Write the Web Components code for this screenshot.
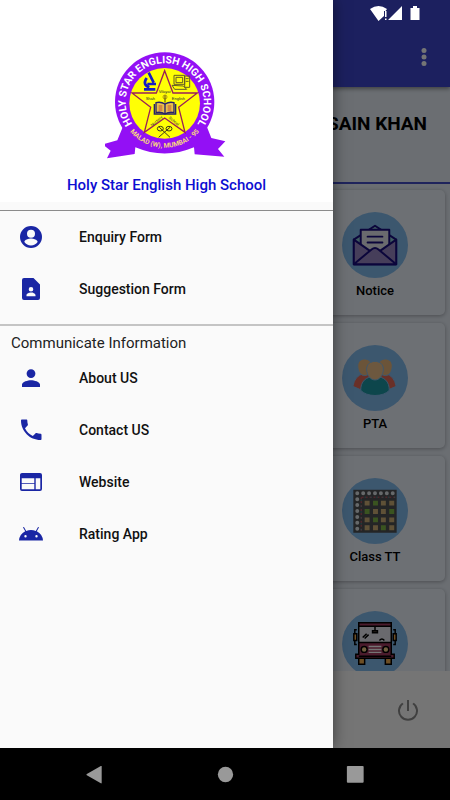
<!DOCTYPE html>
<html lang="en">
<head>
<meta charset="utf-8">
<meta name="viewport" content="width=device-width, initial-scale=1">
<title>Holy Star English High School</title>
<style>
	html, body { height: 100%; margin: 0; }
	body { font-family: Roboto, sans-serif; color: #000; background: #000; }
</style>
</head>
<body>

<school-app></school-app>

<script>

const ICONS = {
	account: '<path fill-rule="evenodd" d="M12 1a11 11 0 1 0 0 22 11 11 0 0 0 0-22zm0 3.800a4 4 0 1 1 0 8 4 4 0 0 1 0-8zm0 15.700a8 8 0 0 1-6.600-3.500c0-2.200 4.400-3.400 6.600-3.400s6.600 1.200 6.600 3.400a8 8 0 0 1-6.600 3.500z"/>',
	contactPage: '<path fill-rule="evenodd" d="M14.500 1H5a2 2 0 0 0-2 2v18a2 2 0 0 0 2 2h14a2 2 0 0 0 2-2V7.500zM12 10a2.300 2.300 0 1 1 0 4.600 2.300 2.300 0 0 1 0-4.600zm4.500 9.200h-9v-.9c0-2 3-2.800 4.500-2.800s4.500.8 4.500 2.800z"/>',
	person: '<path d="M12 12a4.400 4.400 0 1 0 0-8.800 4.400 4.400 0 0 0 0 8.800zm0 2.200c-3 0-9 1.500-9 4.400V21h18v-2.400c0-2.900-6-4.400-9-4.400z"/>',
	phone: '<path d="M6 10.200a16.500 16.500 0 0 0 7.800 7.800l2.600-2.600c.3-.3.800-.4 1.200-.3 1.200.4 2.500.6 3.900.6.600 0 1 .5 1 1v4.300c0 .6-.4 1-1 1C10.800 22 2 13.200 2 2.500c0-.6.500-1 1-1h4.300c.6 0 1 .4 1 1 0 1.400.2 2.700.6 3.900.1.400 0 .8-.3 1.200z"/>',
	web: '<path fill-rule="evenodd" d="M3 3h18a2 2 0 0 1 2 2v14a2 2 0 0 1-2 2H3a2 2 0 0 1-2-2V5c0-1.100.9-2 2-2zm-.3 5.300v4.900h12.600V8.300zm0 5.700v5.300h12.600V14zM16.700 8.300v11h4.600v-11z"/>',
	android: '<path fill-rule="evenodd" d="m17.800 9.300 2-3.500a.5.500 0 0 0-.9-.5l-2.100 3.600a12.500 12.500 0 0 0-9.600 0L5.100 5.300a.5.500 0 0 0-.9.500l2 3.500A11.500 11.500 0 0 0 0 18.500h24a11.500 11.500 0 0 0-6.200-9.200zM6.500 15.500a1.200 1.200 0 1 1 0-2.400 1.200 1.200 0 0 1 0 2.400zm11 0a1.200 1.200 0 1 1 0-2.400 1.200 1.200 0 0 1 0 2.400z"/>',
	more: '<circle cx="12" cy="5.400" r="2.500"/><circle cx="12" cy="12" r="2.500"/><circle cx="12" cy="18.600" r="2.500"/>',
	power: '<path d="M11 2h2v11h-2zM17.800 4.700l-1.400 1.400a8 8 0 1 1-8.800 0L6.200 4.700a10 10 0 1 0 11.600 0z"/>',
	back: '<path d="M19.500 3.500v17.200c0 .5-.5.700-.9.500L4 12.800c-.5-.3-.5-.9 0-1.200l14.600-8.500c.4-.2.900 0 .9.400z"/>',
	home: '<circle cx="12" cy="12" r="8"/>',
	recent: '<rect x="3" y="3" width="17.500" height="17.500" rx="1"/>'
};

const ART = {
	notice: `
		<g stroke="#180d80" stroke-width="2" stroke-linejoin="round">
			<path fill="#8ac6cf" d="M12 28 33.500 14 55 28v25H12z"/>
			<path fill="#e8e8f0" d="M19 18h29v22H19z"/>
			<path fill="#9a87c4" d="M12 28l21.500 15L55 28v25H12z"/>
			<path fill="#9a87c4" d="M12 53l18-15q3.500-3 7 0l18 15z"/>
			<path fill="none" stroke-linecap="round" d="M26 25h15M26 31h15"/>
		</g>`,
	pta: `
		<g stroke="#84bdf0" stroke-width="1">
			<path fill="#e46a58" d="M11 42q2-11 11-13h22q9 2 11 13l-7 3H18z"/>
			<path fill="#e9b87d" d="M16 21c0-9 14-9 14 0 0 6-3 10-7 10s-7-4-7-10zM37 21c0-9 14-9 14 0 0 6-3 10-7 10s-7-4-7-10z"/>
			<path fill="#1d98a5" d="M19 46c0-9 5-14 14.500-14S48 37 48 46c-6 7-23 7-29 0z"/>
			<path fill="#edc08a" d="M25 24.500C25 14 42 14 42 24.500c0 6-4 11-8.500 11S25 30.500 25 24.500z"/>
		</g>`,
	timetable: `
		<path fill="#505254" d="M11.500 12h44v43.500h-44z"/>
		<g fill="none" stroke="#dfe4e8" stroke-width="4" stroke-linecap="round" stroke-dasharray="0 6">
			<path d="M15.500 15.500h37M15.500 21.500v31"/>
		</g>
		<g fill="none" stroke-width="1">
			<path stroke="#d45563" stroke-dasharray="2 2" d="M19.500 19.500v34M20 19.500h34"/>
			<path stroke="#3cb0ba" stroke-dasharray="1 5" d="M19.500 22v31M23 19.500h31"/>
		</g>
		<path fill="#d0b078" d="M23 23h5v5h-5zM39.500 23h5v5h-5zM48 23h5v5h-5zM31.500 31.500h5v5h-5zM39.500 31.500h5v5h-5zM23 40h5v5h-5zM39.500 40h5v5h-5zM48 40h5v5h-5zM23 48h5v5h-5zM31.500 48h5v5h-5zM48 48h5v5h-5z"/>
		<path fill="#7fb747" d="M31.500 23h5v5h-5zM23 31.500h5v5h-5zM48 31.500h5v5h-5zM31.500 40h5v5h-5zM39.500 48h5v5h-5z"/>`,
	bus: `
		<g stroke="#000" stroke-width="1.500">
			<path fill="#f0ad50" d="M17 48h6v6h-6zM44 48h6v6h-6zM12 23h3v7h-3zM52 23h3v7h-3z"/>
			<path fill="none" d="M15 19h-2v4M52 19h2v4M15 34h-2v-4M52 34h2v-4"/>
			<path fill="#a43c60" d="M17 12h33v32h3v4H14v-4h3z"/>
			<path fill="#e8e8f0" d="M17 15.500h33V32H17z"/>
			<path fill="#785c4b" d="M31 20h5v2h-5z"/>
			<path fill="none" d="m21 27 4-4m-2 5 4-4m11 6q2.500-3 5 0M17 46h33M33.500 16v4"/>
			<circle cx="22.500" cy="39" r="3" fill="#f6cf8b"/>
			<circle cx="44.500" cy="39" r="3" fill="#f6cf8b"/>
		</g>
		<path stroke="#fff" stroke-width="1.500" d="M27 36h13M27 39h13M27 42h13"/>`
};

class AppIcon extends HTMLElement {

	constructor() {

		super();

		this.attachShadow({ mode: 'open' });
		this.shadowRoot.innerHTML = `
			<style>
				:host { display: block; width: 24px; height: 24px; }
				svg { display: block; width: 100%; height: 100%; fill: currentColor; }
			</style>
			<svg viewBox="0 0 24 24" aria-hidden="true">${ICONS[this.getAttribute('name')]}</svg>
		`;

	}

}

class SchoolLogo extends HTMLElement {

	constructor() {

		super();

		this.attachShadow({ mode: 'open' });
		this.shadowRoot.innerHTML = `
			<style>
				:host { display: block; width: 124px; height: 110px; }
				svg { display: block; width: 100%; height: 100%; font-family: "Liberation Sans", Arial, sans-serif; }
			</style>
			<svg viewBox="31 22 372 330" role="img" aria-label="School crest">
				<defs>
					<path id="top" d="M127 255A117 117 0 1 1 293 255"/>
					<path id="bottom" d="M90 237A136 136 0 0 0 330 237"/>
				</defs>
				<path fill="#9310f5" d="M24 299 68 287 84 248Q210 365 336 245L350 280 392 290 370 313 389 336 300 329 298 308Q210 345 122 308L120 328 37 341 48 318z"/>
				<circle cx="210" cy="172" r="149" fill="#9310f5"/>
				<circle cx="210" cy="176" r="106" fill="#ffff05"/>
				<path fill="none" stroke="#9a2058" stroke-width="4" d="M210 78 235 145 308 145 252 188 271 263 210 220 149 263 168 188 112 145 185 145z"/>
				<g fill="none" stroke="#161cc4" stroke-width="8">
					<path d="m162 84 15 30M156 100q-14 20 8 28M148 134h34M158 118h26"/>
				</g>
				<g fill="none" stroke="#645b29" stroke-width="3">
					<path d="M238 92h32v27h-32zM244 98h20v16h-20zM270 94h15v34h-15zM273 102h9M273 110h9M232 122l34 2 10 10h-36z"/>
				</g>
				<g stroke="#27216c" stroke-width="4">
					<path fill="#e9c04d" d="M184 174q14-4 27 4 13-8 27-4v30q-14-4-27 4-13-8-27-4z"/>
					<path fill="none" d="M179 178v30h64v-30M211 178v30"/>
					<path stroke="#c0503a" stroke-width="3" d="M192 184h11M192 190h11M192 196h11M219 184h11M219 190h11M219 196h11"/>
				</g>
				<circle cx="211" cy="157" r="6" fill="none" stroke="#b39b10" stroke-width="3"/>
				<path stroke="#54421b" stroke-width="3" d="M211 152v22"/>
				<g fill="none" stroke="#3b341b" stroke-width="3">
					<path d="m194 248 32 30M226 248 192 278"/>
					<ellipse cx="197" cy="252" rx="9" ry="7"/><ellipse cx="223" cy="252" rx="9" ry="7"/>
				</g>
				<g font-size="12" fill="#242a38" text-anchor="middle">
					<text x="210" y="145">Vilayat</text>
					<text x="167" y="167">Shah</text>
					<text x="251" y="167">English</text>
					<text transform="translate(188 232) rotate(-40)">Nursery</text>
					<text transform="translate(235 232) rotate(40)">School</text>
				</g>
				<g font-family="Roboto, sans-serif" font-weight="700" text-anchor="middle">
					<text font-size="31" fill="#fff"><textPath href="#top" startOffset="50%">HOLY STAR ENGLISH HIGH SCHOOL</textPath></text>
					<text font-size="20" fill="#f8d77e"><textPath href="#bottom" startOffset="50%">MALAD (W), MUMBAI - 95</textPath></text>
				</g>
			</svg>
		`;

	}

}

class MenuItem extends HTMLElement {

	constructor() {

		super();

		this.attachShadow({ mode: 'open' });
		this.shadowRoot.innerHTML = `
			<style>
				:host { display: block; }
				a {
					display: flex;
					align-items: center;
					gap: 36px;
					height: 52px;
					padding: 0 19px;
					color: #111;
					font-size: 14px;
					font-weight: 500;
					text-decoration: none;
				}
				app-icon { color: #1a26a4; }
			</style>
			<a href="#"><app-icon name="${this.getAttribute('icon')}"></app-icon><slot></slot></a>
		`;

	}

}

class NavDrawer extends HTMLElement {

	constructor() {

		super();

		this.attachShadow({ mode: 'open' });
		this.shadowRoot.innerHTML = `
			<style>
				:host { display: block; background: #fafafa; box-shadow: 0 0 14px rgba(0,0,0,0.5); overflow: hidden; }
				header {
					display: flex;
					flex-direction: column;
					align-items: center;
					gap: 13px;
					padding: 52px 0 7px;
					background: #fff;
				}
				h1 { margin: 0; font-size: 15px; line-height: 20px; font-weight: 500; color: #0d0dd1; }
				nav { border-top: 1px solid #8b8b8b; margin-top: 8px; }
				nav + nav { border-top: 2px solid #c4c4c4; margin-top: 9px; }
				h2 { margin: 0; padding: 8px 11px 0; font-size: 15px; line-height: 18px; font-weight: 400; color: #222; }
			</style>
			<header>
				<school-logo></school-logo>
				<h1>Holy Star English High School</h1>
			</header>
			<nav>
				<menu-item icon="account">Enquiry Form</menu-item>
				<menu-item icon="contactPage">Suggestion Form</menu-item>
			</nav>
			<nav>
				<h2>Communicate Information</h2>
				<menu-item icon="person">About US</menu-item>
				<menu-item icon="phone">Contact US</menu-item>
				<menu-item icon="web">Website</menu-item>
				<menu-item icon="android">Rating App</menu-item>
			</nav>
		`;

	}

}

class TileCard extends HTMLElement {

	constructor() {

		super();

		this.attachShadow({ mode: 'open' });
		this.shadowRoot.innerHTML = `
			<style>
				:host { display: block; }
				button {
					display: flex;
					flex-direction: column;
					align-items: center;
					gap: 4px;
					width: 100%;
					height: 125px;
					padding: 22px 0 0;
					border: 0;
					border-radius: 5px;
					background: #eef4fc;
					box-shadow: 0 1px 4px rgba(0,0,0,0.3);
					color: #000;
					font: 500 13px/18px Roboto, sans-serif;
				}
				svg { width: 66px; height: 66px; }
			</style>
			<button type="button">
				<svg viewBox="0 0 67 67" aria-hidden="true">
					<circle cx="33.500" cy="33.500" r="33.500" fill="#84bdf0"/>
					${ART[this.getAttribute('art')]}
				</svg>
				<slot></slot>
			</button>
		`;

	}

}

class HomeScreen extends HTMLElement {

	constructor() {

		super();

		this.attachShadow({ mode: 'open' });
		this.shadowRoot.innerHTML = `
			<style>
				:host { display: flex; flex-direction: column; background: #e9f0f9; }
				button { border: 0; padding: 0; background: none; color: inherit; }
				header {
					display: flex;
					justify-content: flex-end;
					flex: none;
					padding: 45px 14px 18px;
					background: #3d46cf;
					color: #fff;
					box-shadow: 0 2px 4px rgba(0,0,0,0.4);
				}
				.profile {
					box-sizing: border-box;
					flex: none;
					height: 97px;
					padding: 25px 23px;
					border-bottom: 2px solid #4450c9;
					text-align: right;
				}
				h2 { margin: 0; font-size: 19px; line-height: 24px; font-weight: 700; }
				.tiles {
					display: grid;
					grid-template-columns: repeat(3, 1fr);
					gap: 8px 10px;
					flex: 1;
					min-height: 0;
					align-content: start;
					padding: 6px 5px 0;
					overflow: hidden;
				}
				tile-card { grid-column: 3; }
				footer {
					display: flex;
					align-items: center;
					justify-content: flex-end;
					flex: none;
					height: 77px;
					padding: 0 30px;
					background: #fff;
					color: #8c8c8c;
				}
			</style>
			<header><button type="button" aria-label="More options"><app-icon name="more"></app-icon></button></header>
			<section class="profile"><h2>SAIN KHAN</h2></section>
			<section class="tiles">
				<tile-card art="notice">Notice</tile-card>
				<tile-card art="pta">PTA</tile-card>
				<tile-card art="timetable">Class TT</tile-card>
				<tile-card art="bus"></tile-card>
			</section>
			<footer><button type="button" aria-label="Log out"><app-icon name="power"></app-icon></button></footer>
		`;

	}

}

class StatusBar extends HTMLElement {

	constructor() {

		super();

		this.attachShadow({ mode: 'open' });
		this.shadowRoot.innerHTML = `
			<style>
				:host { display: flex; justify-content: flex-end; padding: 5px 29px; }
				svg { width: 51px; height: 17px; }
			</style>
			<svg viewBox="0 0 51 17" fill="#fff" aria-hidden="true">
				<path d="M0 4Q8.500-2 17 4l-1.500 2H14v5l-5.500 5zM15 6h1.500v6H15zM15 13.500h1.500V15H15zM32 1v14H18zM40.500 3h2.500V1h4v2h2.500v12h-9z"/>
			</svg>
		`;

	}

}

class SystemNav extends HTMLElement {

	constructor() {

		super();

		this.attachShadow({ mode: 'open' });
		this.shadowRoot.innerHTML = `
			<style>
				:host { display: flex; justify-content: space-between; align-items: center; height: 52px; padding: 0 83px; background: #000; color: #999; }
				button { border: 0; padding: 0; background: none; color: inherit; }
				app-icon { width: 23px; height: 23px; }
			</style>
			<button type="button" aria-label="Back"><app-icon name="back"></app-icon></button>
			<button type="button" aria-label="Home"><app-icon name="home"></app-icon></button>
			<button type="button" aria-label="Recent apps"><app-icon name="recent"></app-icon></button>
		`;

	}

}

class SchoolApp extends HTMLElement {

	constructor() {

		super();

		this.attachShadow({ mode: 'open' });
		this.shadowRoot.innerHTML = `
			<style>
				:host { display: flex; flex-direction: column; height: 100vh; }
				main { display: grid; grid-template: minmax(0, 1fr) / minmax(0, 1fr); flex: 1; min-height: 0; overflow: hidden; }
				main > * { grid-area: 1 / 1; }
				.scrim { background: rgba(0,0,0,0.54); }
				nav-drawer { width: 74%; }
				status-bar { align-self: start; }
			</style>
			<main>
				<home-screen></home-screen>
				<div class="scrim"></div>
				<nav-drawer></nav-drawer>
				<status-bar></status-bar>
			</main>
			<system-nav></system-nav>
		`;

	}

}

customElements.define('app-icon', AppIcon);
customElements.define('school-logo', SchoolLogo);
customElements.define('menu-item', MenuItem);
customElements.define('nav-drawer', NavDrawer);
customElements.define('tile-card', TileCard);
customElements.define('home-screen', HomeScreen);
customElements.define('status-bar', StatusBar);
customElements.define('system-nav', SystemNav);
customElements.define('school-app', SchoolApp);

</script>
</body>
</html>
